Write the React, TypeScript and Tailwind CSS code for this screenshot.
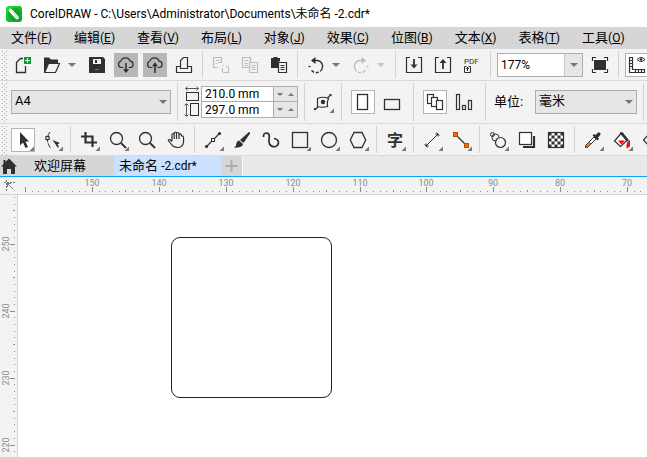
import { useEffect, useState } from "react";
import type { ReactNode } from "react";

const INK = "#303030";
const MUTED = "#bdbdbd";

function Grip() {
  return (
    <svg className="w-[11px] shrink-0 self-stretch" aria-hidden="true">
      <defs>
        <pattern id="grip-dots" x="1" y="2" width="4" height="4" patternUnits="userSpaceOnUse">
          <rect x="1" y="0" width="1" height="1" fill="#adadad" />
          <rect x="3" y="2" width="1" height="1" fill="#adadad" />
        </pattern>
      </defs>
      <rect x="2" y="2" width="5" height="100%" fill="url(#grip-dots)" />
    </svg>
  );
}

function Sep() {
  return <div className="mx-px my-0.5 w-px shrink-0 self-stretch bg-[#d4d4d4]" />;
}

type ToolProps = {
  label: string;
  children: ReactNode;
  look?: "plain" | "dark" | "boxed";
  flyout?: boolean;
  color?: string;
};

const looks = {
  plain: "",
  dark: "bg-[#b7b7b7]",
  boxed: "bg-white outline-1 -outline-offset-1 outline-[#b4b4b4]",
};

function Tool({ label, children, look = "plain", flyout, color = INK }: ToolProps) {
  return (
    <button type="button" aria-label={label} title={label} className={`size-6 shrink-0 ${looks[look]}`}>
      <svg viewBox="0 0 24 24" className="size-6" fill="none" stroke={color} strokeWidth="1">
        {children}
        {flyout && <path d="M23 18.5V23h-4.5Z" fill="#777" stroke="none" />}
      </svg>
    </button>
  );
}

function Triangle({ color = "#777" }: { color?: string }) {
  return (
    <svg viewBox="0 0 8 4" className="h-1 w-2" aria-hidden="true">
      <path d="M0 0h8L4 4Z" fill={color} />
    </svg>
  );
}

function SplitArrow({ label, color }: { label: string; color?: string }) {
  return (
    <button type="button" aria-label={label} className="flex h-6 w-4 items-center justify-center">
      <Triangle color={color} />
    </button>
  );
}

function Combo({ label, id, options, width }: { label: string; id: string; options: string[]; width: string }) {
  return (
    <div className={`relative h-6 shrink-0 ${width}`}>
      <select
        id={id}
        aria-label={label}
        className="block size-full appearance-none border border-[#adadad] bg-[#e6e6e6] pb-0.5 pl-[3px] text-[13px] text-black"
      >
        {options.map((o) => (
          <option key={o}>{o}</option>
        ))}
      </select>
      <span className="pointer-events-none absolute top-[10px] right-[4px] flex">
        <Triangle />
      </span>
    </div>
  );
}

function SizeField({ label, value }: { label: string; value: string }) {
  return (
    <div className="flex h-[15px] items-stretch">
      <input aria-label={label} defaultValue={value} className="w-[71px] min-w-0 bg-white pl-[3px] text-[12px] leading-4" />
      <div className="flex w-6 items-center justify-around border-l border-[#adadad] bg-[#e6e6e6]">
        <button type="button" aria-label={`${label} -`}>
          <svg viewBox="0 0 6 3" className="h-[3px] w-[6px]"><path d="M0 0h6L3 3Z" fill="#777" /></svg>
        </button>
        <button type="button" aria-label={`${label} +`}>
          <svg viewBox="0 0 6 3" className="h-[3px] w-[6px]"><path d="M0 3h6L3 0Z" fill="#777" /></svg>
        </button>
      </div>
    </div>
  );
}

const menus = [
  ["文件", "F"], ["编辑", "E"], ["查看", "V"], ["布局", "L"], ["对象", "J"],
  ["效果", "C"], ["位图", "B"], ["文本", "X"], ["表格", "T"], ["工具", "O"],
];

function MenuBar() {
  return (
    <nav className="flex h-[22px] items-center gap-[22px] overflow-hidden bg-[#d6d6d6] pl-[11px] text-[13px]">
      {menus.map(([name, key]) => (
        <button key={key} type="button" className="shrink-0 whitespace-nowrap">
          {name}<span className="text-[12px]">(<u className="underline-offset-1">{key}</u>)</span>
        </button>
      ))}
    </nav>
  );
}

const CLOUD = "M9.5 14.5H7.5A3.3 3.3 0 0 1 6.8 8.1 5 5 0 0 1 16.2 8.2 3.2 3.2 0 0 1 16.6 14.5H14.5";

function StandardBar() {
  return (
    <div className="flex h-8 items-stretch overflow-hidden border-b border-[#d9d9d9] bg-[#f3f3f3]">
      <Grip />
      <div className="flex items-center gap-[5px]">
        <Tool label="新建">
          <path d="M12 5.5H9.5L5.5 9.5V19.5H14.5V13" strokeWidth="1.3" />
          <rect x="13" y="4" width="7" height="7" fill="#0b9a36" stroke="none" />
          <path d="M16.5 5.2V9.8M14.2 7.5H18.8" stroke="#fff" />
        </Tool>
        <div className="flex">
          <Tool label="打开">
            <path d="M4 19.5V4.5H9L11 6.5H18V10H8.5L5.5 19.5Z" fill={INK} stroke="none" />
            <path d="M8.5 10.5H19.5L15.5 19.5H4.7Z" fill="#f3f3f3" strokeWidth="1.2" />
          </Tool>
          <SplitArrow label="最近打开" />
        </div>
        <Tool label="保存">
          <path d="M4 4H18L20 6V20H4Z" fill={INK} stroke="none" />
          <rect x="8" y="6" width="8" height="5" fill="#f3f3f3" stroke="none" />
          <rect x="10" y="7" width="2" height="3" fill={INK} stroke="none" />
          <path d="M10 16.5H14" stroke="#777" />
        </Tool>
        <Tool label="从云下载" look="dark">
          <path d={CLOUD} strokeWidth="1.2" />
          <path d="M12 10V18" strokeWidth="1.6" />
          <path d="M9 16.3H15L12 20Z" fill={INK} stroke="none" />
        </Tool>
        <Tool label="上传到云" look="dark">
          <path d={CLOUD} strokeWidth="1.2" />
          <path d="M12 12V20" strokeWidth="1.6" />
          <path d="M9 13.2H15L12 9.2Z" fill={INK} stroke="none" />
        </Tool>
        <Tool label="打印">
          <path d="M8 13.5H4.5V19.5H19.5V13.5H16M8.5 15.5V7.5L11.5 4.5H15.5V15.5Z" strokeWidth="1.2" />
        </Tool>
        <Sep />
        <Tool label="剪切" color={MUTED}>
          <path d="M8.5 14.5H4.5V4.5H12.5V9.5H9M6.5 7.5H10.5M6.5 10.5H8.5M13.5 12.5H15M19.5 14V19.5H14M13.5 15V19M17 13.5H19.5" strokeWidth="1.2" />
        </Tool>
        <Tool label="复制" color={MUTED}>
          <path d="M11.5 14.5H4.5V4.5H12.5V9M6.5 7.5H10.5M6.5 10.5H10M6.5 12.5H10" strokeWidth="1.2" />
          <path d="M11.5 9.5H19.5V19.5H11.5ZM13.5 12.5H17.5M13.5 14.5H17.5M13.5 16.5H17.5" strokeWidth="1.2" />
        </Tool>
        <Tool label="粘贴">
          <path d="M4 5H6.5V4H10.5V5H13V8.5H11V15H4Z" fill={INK} stroke="none" />
          <path d="M11.5 9.5H19.5V19.5H11.5ZM13.5 12.5H17.5M13.5 14.5H17.5M13.5 16.5H17.5" strokeWidth="1.2" />
        </Tool>
        <Sep />
        <div className="flex">
          <Tool label="撤消">
            <path d="M8 7.5H13.5A5.8 5.8 0 0 1 18 16" strokeWidth="1.4" />
            <path d="M18 16A6.5 6.5 0 0 1 7 17" strokeWidth="1.4" strokeDasharray="3 1.6" />
            <path d="M11.5 4V11L7 7.5Z" fill={INK} stroke="none" />
            <path d="M4.5 13.5h2" strokeWidth="1.3" />
          </Tool>
          <SplitArrow label="撤消列表" />
        </div>
        <div className="flex">
          <Tool label="重做" color={MUTED}>
            <path d="M16 7.5H10.5A5.8 5.8 0 0 0 6 16" strokeWidth="1.4" />
            <path d="M6 16A6.5 6.5 0 0 0 17 17" strokeWidth="1.4" strokeDasharray="3 1.6" />
            <path d="M12.5 4V11L17 7.5Z" fill={MUTED} stroke="none" />
            <path d="M17.5 13.5h2" strokeWidth="1.3" />
          </Tool>
          <SplitArrow label="重做列表" color="#c4c4c4" />
        </div>
        <Sep />
        <Tool label="导入">
          <path d="M8 4.5H4.5V19.5H19.5V4.5H16" strokeWidth="1.2" />
          <path d="M12 6V14" strokeWidth="1.8" />
          <path d="M8.5 11.5L12 15.5L15.5 11.5Z" fill={INK} stroke="none" />
        </Tool>
        <Tool label="导出">
          <path d="M8 4.5H4.5V19.5H19.5V4.5H16" strokeWidth="1.2" />
          <path d="M12 8V16" strokeWidth="1.8" />
          <path d="M8.5 10L12 6L15.5 10Z" fill={INK} stroke="none" />
        </Tool>
        <Tool label="发布为 PDF">
          <text x="4" y="11" fontSize="8" fill={INK} stroke="none">PDF</text>
          <path d="M6.5 13.5H4.5V19.5H10.5V13.5H8.5M7.5 18V14" />
          <path d="M5.5 16H9.5L7.5 14Z" fill={INK} stroke="none" />
        </Tool>
        <Sep />
        <div className="flex h-6 w-[86px] shrink-0 border border-[#adadad] bg-white">
          <input aria-label="缩放级别" defaultValue="177%" className="min-w-0 flex-1 pl-[3px] text-[12px]" />
          <button type="button" aria-label="缩放列表" className="flex w-[18px] items-center justify-center border-l border-[#c4c4c4] bg-[#e6e6e6]">
            <Triangle />
          </button>
        </div>
        <Tool label="全屏预览">
          <path d="M4.5 8V4.5H8M16 4.5H19.5V8M19.5 16V19.5H16M8 19.5H4.5V16" strokeWidth="1.2" />
          <rect x="6" y="7" width="12" height="10" fill={INK} stroke="none" />
        </Tool>
        <Sep />
        <Tool label="显示标尺" look="boxed">
          <path d="M4.5 4.5H7.5V16.5H19.5V19.5H4.5ZM4.5 7.5H7M4.5 10.5H7M4.5 13.5H7M10.5 17V19M13.5 17V19M16.5 17V19" strokeWidth="1.2" />
          <path d="M12 6.5Q16 2.5 20 6.5Q16 10.5 12 6.5Z" />
          <circle cx="16" cy="6.5" r="1.3" fill={INK} stroke="none" />
        </Tool>
      </div>
    </div>
  );
}

function PropertyBar() {
  return (
    <div className="flex h-[43px] items-stretch overflow-hidden border-b border-[#d9d9d9] bg-[#f3f3f3]">
      <Grip />
      <div className="flex items-center gap-[5px]">
        <Combo id="page-size" label="页面大小" options={["A4", "A3", "A5"]} width="w-40" />
        <Sep />
        <div className="flex items-center">
          <svg viewBox="0 0 16 32" className="mr-px h-8 w-4" fill="none" stroke={INK}>
            <path d="M2 2.5H14M3.5 .5L1.5 2.5L3.5 4.5M12.5 .5L14.5 2.5L12.5 4.5" strokeWidth=".8" />
            <rect x="2.5" y="6.5" width="12" height="8" />
            <path d="M2.5 18V30M.5 19.5L2.5 17.5L4.5 19.5M.5 28.5L2.5 30.5L4.5 28.5" strokeWidth=".8" />
            <rect x="6.5" y="17.5" width="8" height="12" />
          </svg>
          <div className="divide-y divide-[#adadad] border border-[#adadad]">
            <SizeField label="页面宽度" value="210.0 mm" />
            <SizeField label="页面高度" value="297.0 mm" />
          </div>
        </div>
        <Sep />
        <Tool label="页面选项" flyout>
          <path d="M6.5 8.5Q12 6 17.5 8.5Q15.5 12 16.5 16.5Q11 18 6.5 16.5Z" strokeWidth="1.2" />
          <path d="M16.5 8L20 4.5M7 17L3.5 20" strokeWidth="1.2" />
          <circle cx="12" cy="12" r="2.2" fill={INK} stroke="none" />
          <path d="M18 4H20.500V6.500ZM3 18H5.500L3 20.500Z" fill={INK} stroke="none" />
        </Tool>
        <Sep />
        <div className="flex gap-[5px] px-[3px]">
          <Tool label="纵向" look="boxed"><rect x="6.5" y="4.5" width="10" height="15" strokeWidth="1.3" /></Tool>
          <Tool label="横向"><rect x="4.500" y="9.500" width="15" height="10" strokeWidth="1.3" /></Tool>
        </div>
        <Sep />
        <div className="flex gap-[5px] px-[3px]">
          <Tool label="所有页面" look="boxed">
            <g fill="#fff" strokeWidth="1.2">
              <rect x="4.500" y="4.500" width="6" height="9" />
              <rect x="8.500" y="7.500" width="6" height="9" />
              <rect x="13.500" y="10.500" width="6" height="9" />
            </g>
          </Tool>
          <Tool label="当前页面">
            <g strokeWidth="1.2">
              <rect x="4.500" y="4.500" width="3" height="15" />
              <rect x="10.500" y="15.500" width="3" height="4" />
              <rect x="16.500" y="10.500" width="3" height="9" />
            </g>
          </Tool>
        </div>
        <Sep />
        <label htmlFor="units" className="w-[38px] shrink-0 pl-0.5 text-[13px] whitespace-nowrap">单位:</label>
        <Combo id="units" label="单位" options={["毫米", "厘米", "英寸"]} width="w-[102px]" />
        <Sep />
      </div>
    </div>
  );
}

const checks = Array.from({ length: 25 }, (_, i) => i).filter((i) => i % 2 === 0);

function Toolbox() {
  return (
    <div className="flex h-8 items-stretch overflow-hidden border-b border-[#d9d9d9] bg-[#f3f3f3]">
      <Grip />
      <div className="flex items-center gap-[5px]">
        <Tool label="选择" look="boxed" flyout>
          <path d="M9 4V17.500L12 14.500L14.500 20L17 19L14.500 13.500H18Z" fill={INK} stroke="none" />
        </Tool>
        <Tool label="形状" flyout>
          <path d="M10 4Q4.500 11 10.500 20" strokeDasharray="5 1" />
          <rect x="6" y="8.500" width="3" height="3" fill="#fff" strokeWidth="1.2" />
          <path d="M12.500 12L20 15L17.500 16.200L19 19L17.500 19.500L16 17Z" fill={INK} stroke="none" />
        </Tool>
        <Sep />
        <Tool label="裁剪" flyout>
          <path d="M4 8.500H15.500V19M8.500 4V14.500H20" strokeWidth="2.200" />
        </Tool>
        <Tool label="缩放" flyout>
          <circle cx="10.500" cy="10.500" r="6" strokeWidth="1.300" />
          <path d="M15 15L20 20" strokeWidth="1.800" />
        </Tool>
        <Tool label="放大镜">
          <circle cx="10.500" cy="10.500" r="6" strokeWidth="1.300" />
          <path d="M15 15L20 20" strokeWidth="1.800" />
        </Tool>
        <Tool label="平移">
          <path d="M8 13V7Q8 5.500 9 5.500T10.200 7V11M10.200 7V5Q10.200 4 11.300 4T12.500 5V11M12.500 6Q12.500 4.500 13.700 4.500T15 6V11M15 7Q15 5.800 16.200 5.800Q17.500 6 17.500 8L19 8Q19.800 9 19.500 14Q19 19.500 13.500 19.500Q9.500 19.500 7.500 16.500L4.300 12.500Q5 11 6.500 12L8 13.500" strokeWidth="1.200" />
        </Tool>
        <Sep />
        <Tool label="折线" flyout>
          <path d="M6 18L10.500 13.500M13.500 10.500L18 6" strokeWidth="1.200" />
          <rect x="10.500" y="10.500" width="3" height="3" />
          <circle cx="5.500" cy="18.500" r="1.600" fill={INK} stroke="none" />
          <circle cx="18.500" cy="5.500" r="1.600" fill={INK} stroke="none" />
        </Tool>
        <Tool label="艺术笔">
          <path d="M19 4Q20.500 4 20 5.500L13.500 15L10 12Z" fill={INK} stroke="none" />
          <path d="M9 12.500L13 16Q12.500 20 4 19.800Q6.500 18 6.500 15Q7 12.500 9 12.500Z" fill={INK} stroke="none" />
        </Tool>
        <Tool label="手绘">
          <path d="M4.500 9Q4.300 5.200 7.300 5Q10.500 5.200 10.300 8.500Q9.500 13 10.500 16Q12.500 19.200 16 18.700Q19.300 17.800 19.500 14.500Q19 11 15 10.500" strokeWidth="1.700" />
        </Tool>
        <Tool label="矩形" flyout><rect x="4.500" y="4.500" width="15" height="15" strokeWidth="1.300" /></Tool>
        <Tool label="椭圆" flyout><circle cx="12" cy="12" r="7.500" strokeWidth="1.300" /></Tool>
        <Tool label="多边形" flyout><path d="M8 4.500H16L19.700 12L16 19.500H8L4.300 12Z" strokeWidth="1.300" /></Tool>
        <Sep />
        <Tool label="文本" flyout>
          <text x="4" y="18" fontSize="16" fontWeight="700" fill={INK} stroke="none">字</text>
        </Tool>
        <Sep />
        <Tool label="尺度" flyout>
          <path d="M6 18L18 6M4.500 16.500L7.500 19.500M16.500 4.500L19.500 7.500M6 18V15.500M6 18H8.500M18 6H15.500M18 6V8.500" />
        </Tool>
        <Tool label="连接器" flyout>
          <path d="M6 6L18 18" strokeWidth="1.200" />
          <rect x="4.500" y="4.500" width="4" height="4" fill="#f60" stroke="#b64a00" />
          <rect x="15.500" y="15.500" width="4" height="4" fill="#f60" stroke="#b64a00" />
        </Tool>
        <Sep />
        <Tool label="混合" flyout>
          <circle cx="6.500" cy="6.500" r="2" />
          <circle cx="9.500" cy="9.500" r="3.500" />
          <circle cx="14.500" cy="14.500" r="5" fill="#f3f3f3" strokeWidth="1.200" />
        </Tool>
        <Tool label="阴影">
          <path d="M19 8V19H8" strokeWidth="2.200" />
          <rect x="4.500" y="4.500" width="12" height="12" fill="#fff" strokeWidth="1.200" />
        </Tool>
        <Tool label="透明度">
          <rect x="4.500" y="4.500" width="15" height="15" fill="#fff" strokeWidth="1.200" />
          {checks.map((i) => (
            <rect key={i} x={4.500 + (i % 5) * 3} y={4.500 + Math.floor(i / 5) * 3} width="3" height="3" fill={INK} stroke="none" />
          ))}
        </Tool>
        <Sep />
        <Tool label="滴管" flyout>
          <path d="M4.500 19.500L5 17L13 9L15 11L7 19Z" fill="#fff" />
          <path d="M4.500 19.500L5 17L8 14L10 16L7 19Z" fill="#f47a2c" stroke={INK} strokeWidth=".6" />
          <path d="M11.500 7.500L13 6L14.500 7L17 4.500Q19 4 19.500 5.500Q20 7 17 9.500L18 11L16.500 12.500Z" fill={INK} stroke="none" />
        </Tool>
        <Tool label="填充" flyout>
          <path d="M11 5.500L17 12.500L10.500 18.500L4.500 13Z" fill="#fff" strokeWidth="1.200" />
          <path d="M10 5.500L12 5.500L18 13" strokeWidth="2.500" />
          <path d="M8 12.500H15L11.500 16.500Z" fill="#fa0a0a" stroke="none" />
          <path d="M17.500 14L20 12V18L18 20H16.500Q15.800 17.500 17.500 14Z" fill="#fa0a0a" stroke="none" />
        </Tool>
        <Tool label="网状填充">
          <path d="M10 6L4.500 12L10 18" strokeWidth="1.200" />
        </Tool>
      </div>
    </div>
  );
}

function DocumentTabs() {
  return (
    <div className="flex h-[21px] items-stretch border-b border-[#0aa5f5] bg-[#e9e9e9] text-[13px] leading-5">
      <button type="button" aria-label="主页" className="w-[18px] shrink-0 bg-[#d6d6d6]">
        <svg viewBox="0 0 18 20" className="h-5 w-[18px]">
          <path d="M9 2.500L17 10.500H15V18H11V13H7V18H3V10.500H1L3.500 8V4H5.500V6Z" fill={INK} />
        </svg>
      </button>
      <button type="button" className="w-24 shrink-0 bg-[#d6d6d6] pl-4 text-left">欢迎屏幕</button>
      <button type="button" className="w-[107px] shrink-0 bg-[#cce0ff] pl-[5px] text-left whitespace-nowrap">
        未命名 <span className="text-[12px]">-2.cdr*</span>
      </button>
      <button type="button" aria-label="新建标签" className="w-[22px] shrink-0 border-r border-white bg-[#d6d6d6]">
        <svg viewBox="0 0 21 20" className="h-5 w-[21px]">
          <path d="M10.500 4V16M4.500 10H16.500" stroke="#adadad" strokeWidth="2" />
        </svg>
      </button>
    </div>
  );
}

const STEP = 6.69;

function useWindowSize() {
  const [size, setSize] = useState({ width: window.innerWidth, height: window.innerHeight });
  useEffect(() => {
    const update = () => setSize({ width: window.innerWidth, height: window.innerHeight });
    window.addEventListener("resize", update);
    return () => window.removeEventListener("resize", update);
  }, []);
  return size;
}

/** Indices of the marks that fit on a ruler of the given length. */
function marks(length: number) {
  return Array.from({ length: Math.floor(length / STEP) }, (_, i) => i);
}

function HorizontalRuler() {
  const { width } = useWindowSize();
  return (
    <svg className="h-[18px] min-w-0 flex-1" fill="#8c8c8c" fontSize="9">
      {marks(width - 18).map((i) => {
        const x = Math.round(7 + i * STEP);
        const value = 160 - i;
        if (value % 10 === 0) {
          return (
            <g key={i}>
              <rect x={x} y="10" width="1" height="5" />
              {i > 0 && <text x={x} y="9" textAnchor="middle">{Math.abs(value)}</text>}
            </g>
          );
        }
        return <rect key={i} x={x} y={value % 5 === 0 ? 13 : 14} width="1" height={value % 5 === 0 ? 2 : 1} />;
      })}
    </svg>
  );
}

function VerticalRuler() {
  const { height } = useWindowSize();
  return (
    <svg className="w-[17px] shrink-0" fill="#8c8c8c" fontSize="9">
      {marks(height - 195).map((i) => {
        const y = Math.round(2 + i * STEP);
        const value = 257 - i;
        if (value % 10 === 0) {
          return (
            <g key={i}>
              <rect x="10" y={y} width="5" height="1" />
              <text transform={`translate(9 ${y}) rotate(-90)`} textAnchor="middle">{Math.abs(value)}</text>
            </g>
          );
        }
        const mid = value % 5 === 0;
        return <rect key={i} x={mid ? 13 : 14} y={y} width={mid ? 2 : 1} height="1" />;
      })}
    </svg>
  );
}

function Workspace() {
  return (
    <main className="flex min-h-0 flex-1 flex-col bg-[#f3f3f3]">
      <div className="flex h-[18px] shrink-0 border-b border-[#d4d4d4]">
        <svg viewBox="0 0 18 17" className="h-[17px] w-[18px] shrink-0" fill="none" stroke="#777">
          <path d="M4 5.500H15M6.500 3V15" strokeDasharray="2 1" />
          <path d="M7 6L13 12M7.500 10V6.500H11" />
        </svg>
        <HorizontalRuler />
      </div>
      <div className="flex min-h-0 flex-1">
        <VerticalRuler />
        <div className="relative min-w-0 flex-1 overflow-hidden border-l border-[#d4d4d4] bg-white">
          <div className="absolute top-[42px] left-[153px] size-[161px] rounded-[9px] border border-[#231f1e]" />
        </div>
      </div>
    </main>
  );
}

export default function App() {
  return (
    <div className="flex h-screen flex-col overflow-hidden bg-white font-[Roboto,'Noto_Sans_CJK_SC',sans-serif] text-black">
      <header className="flex h-[27px] shrink-0 items-center gap-2 pl-[6px]">
        <svg viewBox="0 0 16 16" className="size-4 shrink-0">
          <defs>
            <linearGradient id="brand" x1="0" y1="0" x2="1" y2="1">
              <stop offset="0" stopColor="#22e03a" />
              <stop offset="1" stopColor="#0a9c2a" />
            </linearGradient>
          </defs>
          <rect width="16" height="16" rx="3" fill="url(#brand)" />
          <circle cx="8" cy="8" r="6.500" fill="#067d1c" opacity=".35" />
          <path d="M4.500 4.500L11 11.500" stroke="#fff" strokeWidth="3.600" strokeLinecap="round" />
          <path d="M6.500 5.500L12.500 12.500" stroke="#a9e8ae" strokeWidth="1" />
        </svg>
        <h1 className="text-[12px] whitespace-nowrap">CorelDRAW - C:\Users\Administrator\Documents\未命名 -2.cdr*</h1>
      </header>
      <div className="shrink-0">
        <MenuBar />
        <StandardBar />
        <PropertyBar />
        <Toolbox />
        <DocumentTabs />
      </div>
      <Workspace />
    </div>
  );
}
